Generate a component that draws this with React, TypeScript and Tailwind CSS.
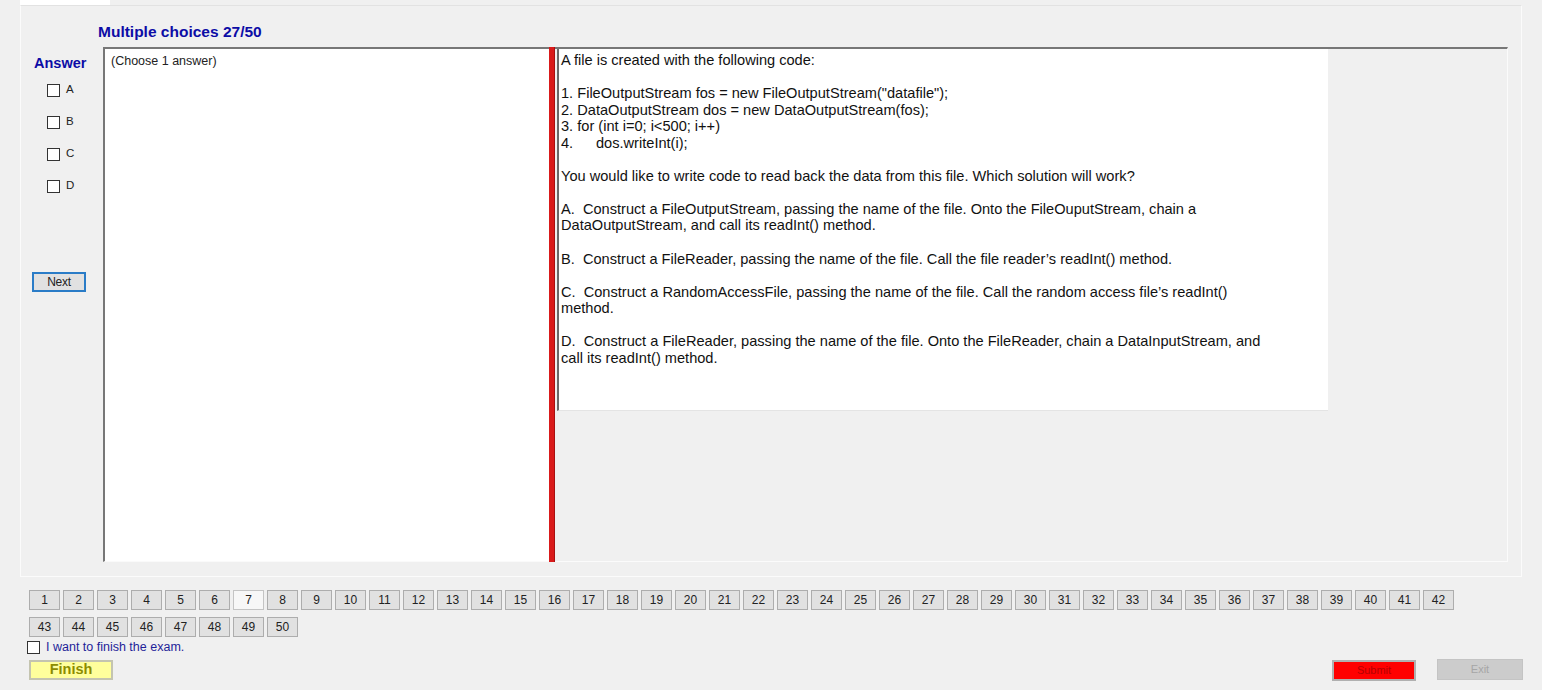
const answers = ['A', 'B', 'C', 'D']
const nums = Array.from({ length: 50 }, (_, i) => i + 1)

const lines: string[] = [
  'A file is created with the following code:',
  '',
  '1. FileOutputStream fos = new FileOutputStream("datafile");',
  '2. DataOutputStream dos = new DataOutputStream(fos);',
  '3. for (int i=0; i<500; i++)',
  '4.|dos.writeInt(i);',
  '',
  'You would like to write code to read back the data from this file. Which solution will work?',
  '',
  'A.  Construct a FileOutputStream, passing the name of the file. Onto the FileOuputStream, chain a',
  'DataOutputStream, and call its readInt() method.',
  '',
  'B.  Construct a FileReader, passing the name of the file. Call the file reader’s readInt() method.',
  '',
  'C.  Construct a RandomAccessFile, passing the name of the file. Call the random access file’s readInt()',
  'method.',
  '',
  'D.  Construct a FileReader, passing the name of the file. Onto the FileReader, chain a DataInputStream, and',
  'call its readInt() method.',
]

function Box() {
  return <span className="inline-block w-[13px] h-[13px] bg-white border border-[#333333] shrink-0" />
}

function NumBtn({ n }: { n: number }) {
  const cur = n === 7
  return (
    <div
      className={
        cur
          ? 'w-[31px] h-[20px] flex items-center justify-center text-[12px] text-[#222] bg-[#f7f7f7] border border-[#c4c4c4]'
          : 'w-[31px] h-[20px] flex items-center justify-center text-[12px] text-[#222] bg-[#e1e1e1] border border-[#adadad]'
      }
    >
      {n}
    </div>
  )
}

export default function App() {
  return (
    <div className="w-[1542px] h-[690px] bg-[#f0f0f0] overflow-hidden font-['Liberation_Sans',Arial,sans-serif] text-black">
      {/* tab strip */}
      <div className="h-[5px] flex">
        <div className="ml-[20px] w-[90px] h-[5px] bg-white" />
      </div>

      {/* tab page */}
      <div className="ml-[20px] w-[1502px] h-[572px] border border-[#fbfbfb] border-t-[#e2e2e2]">
        <div className="pl-[77px] pt-[17px] h-[41px] text-[15.5px] leading-[18px] font-bold text-[#0c0ca6]">
          Multiple choices 27/50
        </div>

        <div className="flex">
          {/* answer column */}
          <div className="w-[82px] shrink-0">
            <div className="pl-[13px] mt-[8px] h-[19px] text-[14.5px] leading-[17px] font-bold text-[#0c0ca6]">
              Answer
            </div>
            {answers.map(a => (
              <div key={a} className="h-[32px] pl-[26px] flex items-center gap-[6px] text-[11.5px] text-[#222]">
                <Box />
                <span>{a}</span>
              </div>
            ))}
            <div className="mt-[70px] ml-[11px] w-[54px] h-[20px] flex items-center justify-center bg-[#e1e1e1] border-2 border-[#2a7cc7] text-[12px] tracking-[-0.3px] text-[#222]">
              Next
            </div>
          </div>

          {/* sunken panel */}
          <div className="flex w-[1405px] h-[515px]">
            <div className="w-[446px] h-full bg-white border-t-2 border-l-2 border-[#777777] border-b border-b-[#fafafa] pl-[6px] pt-[5px] text-[12.5px] leading-[15px] text-[#222]">
              (Choose 1 answer)
            </div>
            <div className="w-[6px] h-full bg-[#d91a1a] border-r border-[#a81010]" />
            <div className="flex-1 h-full border-t-2 border-[#777777] border-r border-r-[#fbfbfb] border-b border-b-[#fbfbfb]">
              <div className="ml-[2px] w-[771px] h-[362px] bg-white border-l-2 border-[#6a6a6a] border-b border-b-[#e4e4e4] pl-[2px] pt-[3px] text-[14.6px] leading-[16.55px] text-[#111]">
                {lines.map((l, i) => {
                  if (l === '') return <div key={i} className="h-[16.55px]" />
                  if (l.includes('|')) {
                    const [a, b] = l.split('|')
                    return (
                      <div key={i} className="whitespace-pre">
                        <span className="inline-block w-[35px]">{a}</span>
                        {b}
                      </div>
                    )
                  }
                  return (
                    <div key={i} className="whitespace-pre">
                      {l}
                    </div>
                  )
                })}
              </div>
            </div>
          </div>
        </div>
      </div>

      {/* question navigator */}
      <div className="pl-[29px] mt-[13px] flex flex-col gap-[7px]">
        <div className="flex gap-[3px]">
          {nums.slice(0, 42).map(n => (
            <NumBtn key={n} n={n} />
          ))}
        </div>
        <div className="flex gap-[3px]">
          {nums.slice(42).map(n => (
            <NumBtn key={n} n={n} />
          ))}
        </div>
      </div>

      <div className="pl-[27px] mt-[2px] h-[16px] flex items-center gap-[6px] text-[12.5px] text-[#1f1f99]">
        <Box />
        <span>I want to finish the exam.</span>
      </div>

      <div className="mt-[5px] flex items-start pl-[29px] pr-[19px]">
        <div className="w-[84px] h-[20px] flex items-center justify-center bg-[#ffff9c] border-2 border-[#c4c4b0] text-[14.5px] font-bold text-[#8c8c00]">
          Finish
        </div>
        <div className="flex-1" />
        <div className="w-[84px] h-[21px] flex items-center justify-center bg-[#ff0000] border-2 border-[#b0b0b0] text-[11px] text-[#b30000]">
          Submit
        </div>
        <div className="ml-[21px] -mt-[1px] w-[86px] h-[21px] flex items-center justify-center bg-[#cccccc] border border-[#c4c4c4] text-[11px] text-[#a6a6a6]">
          Exit
        </div>
      </div>
    </div>
  )
}
